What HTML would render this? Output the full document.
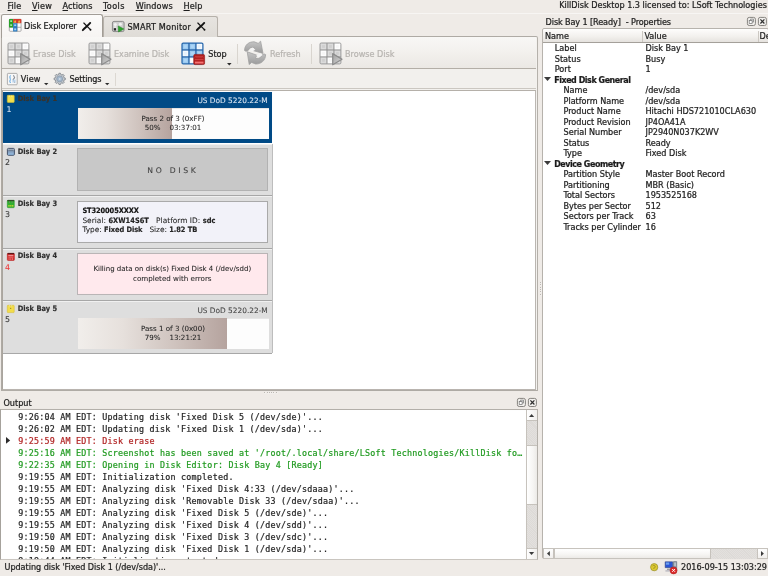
<!DOCTYPE html>
<html lang="en">
<head>
<meta charset="utf-8">
<title>KillDisk Desktop 1.3</title>
<style>
html,body{margin:0;padding:0;}
body{-webkit-text-stroke:0.22px;width:768px;height:576px;overflow:hidden;position:relative;background:#efebe7;font-family:"DejaVu Sans Condensed","Liberation Sans",sans-serif;font-size:9px;color:#1a1a1a;}
#root{position:absolute;left:0;top:0;width:768px;height:576px;overflow:hidden;transform:rotate(0.003deg);transform-origin:384px 288px;will-change:transform;}
.a{position:absolute;white-space:pre;}
.t{position:absolute;white-space:pre;line-height:11px;height:11px;}
.dis{color:#b7b4b0;}
u{text-decoration:underline;text-underline-offset:1.2px;text-decoration-thickness:0.9px;}
.card{font-family:"DejaVu Sans","Liberation Sans",sans-serif;-webkit-text-stroke:0.06px;}
.cb{font-family:"DejaVu Sans Condensed","Liberation Sans",sans-serif;font-weight:bold;-webkit-text-stroke:0.15px;}
.mono{font-family:"DejaVu Sans Mono","Liberation Mono",monospace;font-size:8.4px;letter-spacing:0.21px;-webkit-text-stroke:0.2px;}
.log{position:absolute;left:18.3px;white-space:pre;line-height:12px;height:12px;color:#222;}
.red{color:#b02222;}
.grn{color:#1f9a1f;}
.row{position:absolute;left:0;height:10.5px;line-height:10.5px;white-space:pre;}
svg{position:absolute;overflow:visible;}
</style>
</head>
<body>
<div id="root">
<!-- ===== menu bar ===== -->
<div class="a" id="menubar-edge" style="left:0px;top:12.7px;width:768px;height:1.1px;background:#f7f5f3;"></div>
<div class="t" style="left:7.5px;top:1.1px;letter-spacing:0.05px;"><u>F</u>ile</div>
<div class="t" style="left:32px;top:1.1px;letter-spacing:0.2px;"><u>V</u>iew</div>
<div class="t" style="left:62.5px;top:1.1px;letter-spacing:0.05px;"><u>A</u>ctions</div>
<div class="t" style="left:103px;top:1.1px;letter-spacing:0.42px;"><u>T</u>ools</div>
<div class="t" style="left:135.7px;top:1.1px;letter-spacing:0.14px;"><u>W</u>indows</div>
<div class="t" style="left:183.5px;top:1.1px;letter-spacing:0.12px;"><u>H</u>elp</div>
<div class="t" style="right:1.1px;top:0.4px;">KillDisk Desktop 1.3 licensed to: LSoft Technologies</div>
<!-- ===== tab widget ===== -->
<div class="a" id="pane" style="left:0.5px;top:36.4px;width:535.6px;height:352.2px;border:1px solid #aeaaa4;border-right-color:#b4b0aa;border-radius:0 2px 0 0;background:#f3f1ee;"></div>
<div class="a" id="tab2" style="left:103px;top:16.2px;width:115px;height:20.5px;background:linear-gradient(#e7e4e0,#dfdcd7);border:1px solid #b6b1aa;border-bottom:none;border-radius:2.5px 2.5px 0 0;box-sizing:border-box;"></div>
<div class="a" id="tab1" style="left:0.5px;top:14.2px;width:102.7px;height:24px;background:linear-gradient(#fcfbfa,#f6f4f2);border:1px solid #a19c95;border-bottom:none;border-radius:2.5px 2.5px 0 0;box-sizing:border-box;"></div>
<div class="t" style="left:24px;top:21.2px;letter-spacing:-0.08px;">Disk Explorer</div>
<div class="t" style="left:127.5px;top:21.5px;letter-spacing:0.2px;">SMART Monitor</div>
<!-- ===== toolbar ===== -->
<div class="a" id="tb1" style="left:1.5px;top:37.4px;width:534.6px;height:30.6px;background:linear-gradient(#f8f7f5,#f3f1ee 45%,#ebe8e4);border-bottom:1px solid #b3aea7;"></div>
<div class="t dis" style="left:33px;top:48.5px;">Erase Disk</div>
<div class="t dis" style="left:114px;top:48.5px;">Examine Disk</div>
<div class="t" style="left:208.3px;top:49.0px;">Stop</div>
<div class="t dis" style="left:270px;top:48.5px;">Refresh</div>
<div class="t dis" style="left:345px;top:48.5px;">Browse Disk</div>
<div class="a" style="left:237px;top:44px;width:1px;height:20px;background:#d9d5cf;"></div>
<div class="a" style="left:310.5px;top:44px;width:1px;height:20px;background:#d9d5cf;"></div>
<div class="a" id="tb2" style="left:1.5px;top:69.3px;width:534.6px;height:19px;background:#f2f0ed;border-bottom:1px solid #cbc7c1;"></div>
<div class="t" style="left:20.8px;top:74.2px;letter-spacing:0.12px;">View</div>
<div class="t" style="left:69.6px;top:74.2px;letter-spacing:-0.2px;">Settings</div>
<div class="a" style="left:114.5px;top:72.5px;width:1px;height:13px;background:#dcd8d2;"></div>
<!-- ===== content ===== -->
<div class="a" id="content" style="left:1.7px;top:90px;width:534.2px;height:299.9px;background:#fff;border-top:1px solid #b5b0a9;border-left:1px solid #aaa59e;border-right:0.7px solid #bab6b1;border-bottom:1px solid #b9b4af;box-sizing:border-box;"></div>
<div class="a" id="bay1" style="left:2.7px;top:91.5px;width:269px;height:51.8px;background:#004a86;"></div>
<div class="a" id="bay2" style="left:2.7px;top:143.5px;width:269px;height:50.8px;background:#dedede;border-top:1.2px solid #f0f0f0;border-bottom:1px solid #a6a6a6;"></div>
<div class="a" id="bay3" style="left:2.7px;top:196.0px;width:269px;height:50.8px;background:#dedede;border-top:1.2px solid #f0f0f0;border-bottom:1px solid #a6a6a6;"></div>
<div class="a" id="bay4" style="left:2.7px;top:248.5px;width:269px;height:50.8px;background:#dedede;border-top:1.2px solid #f0f0f0;border-bottom:1px solid #a6a6a6;"></div>
<div class="a" id="bay5" style="left:2.7px;top:301.0px;width:269px;height:50.8px;background:#dedede;border-top:1.2px solid #f0f0f0;border-bottom:1px solid #a6a6a6;"></div>
<div class="a" style="left:271.5px;top:143.5px;width:0.8px;height:209px;background:#bdbdbd;"></div>
<div class="t cb" style="left:17.7px;top:92.9px;font-size:7.45px;letter-spacing:0.02px;color:#3a3228;">Disk Bay 1</div>
<div class="t card" style="left:6.4px;top:104.2px;font-size:7.9px;color:#d4e3f2;">1</div>
<div class="t cb" style="left:17.7px;top:145.5px;font-size:7.45px;letter-spacing:0.02px;color:#2e2e2e;">Disk Bay 2</div>
<div class="t card" style="left:5.0px;top:156.8px;font-size:7.9px;color:#333;">2</div>
<div class="t cb" style="left:17.7px;top:197.9px;font-size:7.45px;letter-spacing:0.02px;color:#2e2e2e;">Disk Bay 3</div>
<div class="t card" style="left:5.0px;top:209.2px;font-size:7.9px;color:#333;">3</div>
<div class="t cb" style="left:17.7px;top:250.4px;font-size:7.45px;letter-spacing:0.02px;color:#2e2e2e;">Disk Bay 4</div>
<div class="t card" style="left:5.0px;top:261.7px;font-size:7.9px;color:#ee3a3a;">4</div>
<div class="t cb" style="left:17.7px;top:302.8px;font-size:7.45px;letter-spacing:0.02px;color:#2e2e2e;">Disk Bay 5</div>
<div class="t card" style="left:5.0px;top:314.1px;font-size:7.9px;color:#333;">5</div>
<!-- bay 1 -->
<div class="t card" style="right:500.3px;top:94.8px;font-size:7.4px;color:#dfe9f4;">US DoD 5220.22-M</div>
<div class="a" style="left:77.5px;top:107.5px;width:191px;height:31.4px;background:#fdfdfd;box-shadow:inset 0 0.8px 0 rgba(0,0,0,0.12);"></div>
<div class="a" style="left:77.5px;top:107.5px;width:94.9px;height:31.4px;background:linear-gradient(90deg,#f1eeeb 0%,#e6e0dc 30%,#cfc3be 65%,#b5a39e 100%);"></div>
<div class="t card" style="left:77.5px;width:191px;text-align:center;top:112.7px;font-size:7.1px;color:#222;">Pass 2 of 3 (0xFF)</div>
<div class="t card" style="left:77.5px;width:191px;text-align:center;top:122.2px;font-size:7.1px;color:#222;">50%    03:37:01</div>
<!-- bay 2 -->
<div class="a" style="left:77px;top:148px;width:190.7px;height:42.6px;background:#c8c8c8;border:1px solid #b2b2b2;box-sizing:border-box;"></div>
<div class="t card" style="left:77px;width:192px;text-align:center;top:165.4px;font-size:7.7px;color:#3c3c3c;letter-spacing:2.7px;">NO DISK</div>
<!-- bay 3 -->
<div class="a" style="left:77px;top:200.6px;width:190.7px;height:42.9px;background:#f2f2f9;border:1px solid #a9a9a9;box-sizing:border-box;"></div>
<div class="t cb" style="left:82.4px;top:204.8px;font-size:7.4px;color:#111;letter-spacing:-0.1px;">ST320005XXXX</div>
<div class="t card" style="left:82.4px;top:214.6px;font-size:7.4px;color:#222;letter-spacing:0.03px;">Serial: <b class="cb">6XW14S6T</b>   Platform ID: <b class="cb">sdc</b></div>
<div class="t card" style="left:82.4px;top:224.2px;font-size:7.4px;color:#222;letter-spacing:-0.04px;">Type: <b class="cb">Fixed Disk</b>   Size: <b class="cb">1.82 TB</b></div>
<!-- bay 4 -->
<div class="a" style="left:77px;top:253.1px;width:190.7px;height:42.4px;background:#ffe9ed;border:1px solid #b9b4b5;box-sizing:border-box;"></div>
<div class="t card" style="left:77px;width:190.5px;text-align:center;top:263.6px;font-size:7px;color:#222;">Killing data on disk(s) Fixed Disk 4 (/dev/sdd)</div>
<div class="t card" style="left:77px;width:190.5px;text-align:center;top:273.2px;font-size:7.15px;color:#222;">completed with errors</div>
<!-- bay 5 -->
<div class="t card" style="right:500.3px;top:304.8px;font-size:7.4px;color:#444;">US DoD 5220.22-M</div>
<div class="a" style="left:77.5px;top:317.5px;width:191px;height:31.4px;background:#fdfdfd;box-shadow:inset 0 0.8px 0 rgba(0,0,0,0.12);"></div>
<div class="a" style="left:77.5px;top:317.5px;width:149.9px;height:31.4px;background:linear-gradient(90deg,#f1eeeb 0%,#e6e0dc 30%,#cfc3be 65%,#b5a39e 100%);"></div>
<div class="t card" style="left:77.5px;width:191px;text-align:center;top:322.7px;font-size:7.1px;color:#222;">Pass 1 of 3 (0x00)</div>
<div class="t card" style="left:77.5px;width:191px;text-align:center;top:332.2px;font-size:7.1px;color:#222;">79%    13:21:21</div>
<div class="a" style="left:264.2px;top:391.8px;width:1.1px;height:1.1px;background:#bbb7b2;box-shadow:0.5px 0.5px 0 #fbfaf9;"></div>
<div class="a" style="left:266.5px;top:391.8px;width:1.1px;height:1.1px;background:#bbb7b2;box-shadow:0.5px 0.5px 0 #fbfaf9;"></div>
<div class="a" style="left:268.8px;top:391.8px;width:1.1px;height:1.1px;background:#bbb7b2;box-shadow:0.5px 0.5px 0 #fbfaf9;"></div>
<div class="a" style="left:271.1px;top:391.8px;width:1.1px;height:1.1px;background:#bbb7b2;box-shadow:0.5px 0.5px 0 #fbfaf9;"></div>
<div class="a" style="left:273.4px;top:391.8px;width:1.1px;height:1.1px;background:#bbb7b2;box-shadow:0.5px 0.5px 0 #fbfaf9;"></div>
<div class="a" style="left:275.7px;top:391.8px;width:1.1px;height:1.1px;background:#bbb7b2;box-shadow:0.5px 0.5px 0 #fbfaf9;"></div>
<div class="a" style="left:539.8px;top:282.0px;width:1.1px;height:1.1px;background:#bbb7b2;box-shadow:0.5px 0.5px 0 #fbfaf9;"></div>
<div class="a" style="left:539.8px;top:284.3px;width:1.1px;height:1.1px;background:#bbb7b2;box-shadow:0.5px 0.5px 0 #fbfaf9;"></div>
<div class="a" style="left:539.8px;top:286.6px;width:1.1px;height:1.1px;background:#bbb7b2;box-shadow:0.5px 0.5px 0 #fbfaf9;"></div>
<div class="a" style="left:539.8px;top:288.9px;width:1.1px;height:1.1px;background:#bbb7b2;box-shadow:0.5px 0.5px 0 #fbfaf9;"></div>
<div class="a" style="left:539.8px;top:291.2px;width:1.1px;height:1.1px;background:#bbb7b2;box-shadow:0.5px 0.5px 0 #fbfaf9;"></div>
<div class="a" style="left:539.8px;top:293.5px;width:1.1px;height:1.1px;background:#bbb7b2;box-shadow:0.5px 0.5px 0 #fbfaf9;"></div>
<!-- ===== output dock ===== -->
<div class="t" style="left:3.5px;top:397.8px;">Output</div>
<div class="a" id="outbox" style="left:0px;top:409px;width:537.7px;height:150.6px;background:#fff;border:1px solid #b3afa9;border-left-color:#a5a19b;border-bottom-color:#c9c5bf;box-sizing:border-box;"></div>
<div class="a mono" id="loglines" style="left:0;top:410.4px;width:526px;height:148.2px;overflow:hidden;">
<div class="log" style="top:0.2px;">9:26:04 AM EDT: Updating disk 'Fixed Disk 5 (/dev/sde)'...</div>
<div class="log" style="top:12.2px;">9:26:02 AM EDT: Updating disk 'Fixed Disk 1 (/dev/sda)'...</div>
<div class="log red" style="top:24.2px;">9:25:59 AM EDT: Disk erase</div>
<div class="log grn" style="top:36.2px;">9:25:16 AM EDT: Screenshot has been saved at '/root/.local/share/LSoft Technologies/KillDisk fo…</div>
<div class="log grn" style="top:48.2px;">9:22:35 AM EDT: Opening in Disk Editor: Disk Bay 4 [Ready]</div>
<div class="log" style="top:60.2px;">9:19:55 AM EDT: Initialization completed.</div>
<div class="log" style="top:72.2px;">9:19:55 AM EDT: Analyzing disk 'Fixed Disk 4:33 (/dev/sdaaa)'...</div>
<div class="log" style="top:84.2px;">9:19:55 AM EDT: Analyzing disk 'Removable Disk 33 (/dev/sdaa)'...</div>
<div class="log" style="top:96.2px;">9:19:55 AM EDT: Analyzing disk 'Fixed Disk 5 (/dev/sde)'...</div>
<div class="log" style="top:108.2px;">9:19:55 AM EDT: Analyzing disk 'Fixed Disk 4 (/dev/sdd)'...</div>
<div class="log" style="top:120.2px;">9:19:50 AM EDT: Analyzing disk 'Fixed Disk 3 (/dev/sdc)'...</div>
<div class="log" style="top:132.2px;">9:19:50 AM EDT: Analyzing disk 'Fixed Disk 1 (/dev/sda)'...</div>
<div class="log" style="top:144.2px;">9:19:44 AM EDT: Initialization started...</div>
</div>
<!-- ===== status bar ===== -->
<div class="t" style="left:4.5px;top:562.2px;letter-spacing:-0.03px;">Updating disk 'Fixed Disk 1 (/dev/sda)'...</div>
<div class="t" style="right:1px;top:561.8px;">2016-09-15 13:03:29</div>
<!-- ===== properties dock ===== -->
<div class="t" style="left:545.6px;top:16.6px;letter-spacing:-0.1px;">Disk Bay 1 [Ready]  - Properties</div>
<div class="a" id="tree" style="left:542px;top:28.4px;width:226.5px;height:530.8px;background:#fff;border:1px solid #b6b2ac;border-radius:2px;box-sizing:border-box;"></div>
<div class="a" id="thead" style="left:543px;top:29.5px;width:225px;height:12.6px;background:linear-gradient(#fcfbfa,#f2f0ed 55%,#e5e2de);border-bottom:1px solid #a39f99;"></div>
<div class="a" style="left:642px;top:30.5px;width:1px;height:11px;background:#cbc7c1;"></div>
<div class="a" style="left:757.5px;top:30.5px;width:1px;height:11px;background:#cbc7c1;"></div>
<div class="t" style="left:545px;top:31.2px;">Name</div>
<div class="t" style="left:644.5px;top:31.2px;">Value</div>
<div class="t" style="left:759.5px;top:31.2px;">De</div>
<div class="a" id="rows" style="left:543px;top:43.45px;width:225px;height:200px;">
<div class="row" style="top:0.0px;left:11.8px;">Label</div>
<div class="row" style="top:0.0px;left:102.5px;">Disk Bay 1</div>
<div class="row" style="top:10.5px;left:11.8px;">Status</div>
<div class="row" style="top:10.5px;left:102.5px;">Busy</div>
<div class="row" style="top:21.0px;left:11.8px;">Port</div>
<div class="row" style="top:21.0px;left:102.5px;">1</div>
<div class="row" style="top:31.5px;left:11.2px;font-weight:bold;font-size:8.8px;letter-spacing:-0.42px;">Fixed Disk General</div>
<svg style="left:0.8px;top:33.8px;" width="7" height="3.9" viewBox="0 0 7 3.9"><path d="M0 0 L7 0 L3.5 3.9 Z" fill="#3a3a3a"/></svg>
<div class="row" style="top:42.0px;left:20.5px;">Name</div>
<div class="row" style="top:42.0px;left:102.5px;">/dev/sda</div>
<div class="row" style="top:52.5px;left:20.5px;">Platform Name</div>
<div class="row" style="top:52.5px;left:102.5px;">/dev/sda</div>
<div class="row" style="top:63.0px;left:20.5px;">Product Name</div>
<div class="row" style="top:63.0px;left:102.5px;">Hitachi HDS721010CLA630</div>
<div class="row" style="top:73.5px;left:20.5px;">Product Revision</div>
<div class="row" style="top:73.5px;left:102.5px;">JP4OA41A</div>
<div class="row" style="top:84.0px;left:20.5px;">Serial Number</div>
<div class="row" style="top:84.0px;left:102.5px;">JP2940N037K2WV</div>
<div class="row" style="top:94.5px;left:20.5px;">Status</div>
<div class="row" style="top:94.5px;left:102.5px;">Ready</div>
<div class="row" style="top:105.0px;left:20.5px;">Type</div>
<div class="row" style="top:105.0px;left:102.5px;">Fixed Disk</div>
<div class="row" style="top:115.5px;left:11.2px;font-weight:bold;font-size:8.8px;letter-spacing:-0.42px;">Device Geometry</div>
<svg style="left:0.8px;top:117.8px;" width="7" height="3.9" viewBox="0 0 7 3.9"><path d="M0 0 L7 0 L3.5 3.9 Z" fill="#3a3a3a"/></svg>
<div class="row" style="top:126.0px;left:20.5px;">Partition Style</div>
<div class="row" style="top:126.0px;left:102.5px;">Master Boot Record</div>
<div class="row" style="top:136.5px;left:20.5px;">Partitioning</div>
<div class="row" style="top:136.5px;left:102.5px;">MBR (Basic)</div>
<div class="row" style="top:147.0px;left:20.5px;">Total Sectors</div>
<div class="row" style="top:147.0px;left:102.5px;">1953525168</div>
<div class="row" style="top:157.5px;left:20.5px;">Bytes per Sector</div>
<div class="row" style="top:157.5px;left:102.5px;">512</div>
<div class="row" style="top:168.0px;left:20.5px;">Sectors per Track</div>
<div class="row" style="top:168.0px;left:102.5px;">63</div>
<div class="row" style="top:178.5px;left:20.5px;">Tracks per Cylinder</div>
<div class="row" style="top:178.5px;left:102.5px;">16</div>
</div>
<svg style="left:8.9px;top:19.2px;" width="12.4" height="12.6" viewBox="0 0 12.4 12.6"><rect x="0.3" y="0.3" width="11.8" height="12" rx="0.8" fill="#fdfdfd" stroke="#8c8c8c" stroke-width="0.7"/><path d="M4.1 8.3 H12.1 M8.2 4.1 V12.3 M0.3 8.3 H4.1" stroke="#8c8c8c" stroke-width="0.7" fill="none"/><rect x="0" y="0" width="4.2" height="8.4" rx="0.6" fill="#27a127"/><rect x="4.1" y="0" width="8.2" height="4.3" rx="0.6" fill="#d53a2c"/><rect x="4.1" y="4.2" width="4.1" height="8.3" fill="#2c7cc0"/><rect x="1.2" y="1.3" width="1.9" height="1.7" fill="#a6e0a6"/><rect x="1.2" y="5.3" width="1.9" height="1.7" fill="#a6e0a6"/><path d="M5.0 3.4 L6.1 1.0 L7.2 3.4 Z M9.0 3.4 L10.1 1.0 L11.2 3.4 Z" fill="#f8e24a"/><rect x="5.2" y="5.4" width="2.0" height="1.7" fill="#a6d6f8"/><rect x="5.2" y="9.4" width="2.0" height="1.9" fill="#a6d6f8"/></svg>
<svg style="left:81.6px;top:22.0px;" width="10" height="10" viewBox="0 0 10 10"><path d="M1.8 1.0 L8.4 7.6" stroke="#111" stroke-width="1.15" stroke-linecap="round" fill="none"/><path d="M8.2 0.9 C6.2 3.0 3.4 5.6 0.8 8.2" stroke="#111" stroke-width="1.9" stroke-linecap="round" fill="none"/><circle cx="8.5" cy="7.7" r="0.95" fill="#111"/></svg>
<svg style="left:195.9px;top:22.0px;" width="10" height="10" viewBox="0 0 10 10"><path d="M1.8 1.0 L8.4 7.6" stroke="#111" stroke-width="1.15" stroke-linecap="round" fill="none"/><path d="M8.2 0.9 C6.2 3.0 3.4 5.6 0.8 8.2" stroke="#111" stroke-width="1.9" stroke-linecap="round" fill="none"/><circle cx="8.5" cy="7.7" r="0.95" fill="#111"/></svg>
<svg style="left:112.2px;top:21px;" width="12.6" height="11.2" viewBox="0 0 12.6 11.2"><rect x="0.4" y="0.4" width="11.7" height="10.2" rx="1.6" fill="#cfcfcf" stroke="#777" stroke-width="0.8"/><circle cx="3.3" cy="3.4" r="1.5" fill="#f2f2f2"/><circle cx="8.4" cy="3.2" r="1.5" fill="#f2f2f2"/><circle cx="3.2" cy="6.2" r="1.2" fill="#e6e6e6"/><rect x="1.8" y="7.2" width="2.2" height="2.3" fill="#222"/><path d="M6.2 5.0 L11.9 8.0 L6.5 11.0 Z" fill="#2fa32f" stroke="#1d7f1d" stroke-width="0.5"/></svg>
<svg style="left:7.6px;top:43.0px;" width="23" height="23" viewBox="0 0 23 23"><rect x="0" y="0" width="20.9" height="20.9" rx="1.2" fill="#fff"/><rect x="0.0" y="0.0" width="6.97" height="6.97" fill="#dbdbdb"/><rect x="2.09" y="2.09" width="2.79" height="2.79" fill="#cfcfcf"/><rect x="6.97" y="0.0" width="6.97" height="6.97" fill="#dbdbdb"/><rect x="9.06" y="2.09" width="2.79" height="2.79" fill="#cfcfcf"/><rect x="13.93" y="0.0" width="6.97" height="6.97" fill="#fdfdfd"/><rect x="16.02" y="2.09" width="2.79" height="2.79" fill="#f6f6f6"/><rect x="0.0" y="6.97" width="6.97" height="6.97" fill="#fdfdfd"/><rect x="2.09" y="9.06" width="2.79" height="2.79" fill="#f6f6f6"/><rect x="6.97" y="6.97" width="6.97" height="6.97" fill="#dbdbdb"/><rect x="9.06" y="9.06" width="2.79" height="2.79" fill="#cfcfcf"/><rect x="13.93" y="6.97" width="6.97" height="6.97" fill="#dbdbdb"/><rect x="16.02" y="9.06" width="2.79" height="2.79" fill="#cfcfcf"/><rect x="0.0" y="13.93" width="6.97" height="6.97" fill="#dbdbdb"/><rect x="2.09" y="16.02" width="2.79" height="2.79" fill="#cfcfcf"/><rect x="6.97" y="13.93" width="6.97" height="6.97" fill="#fdfdfd"/><rect x="9.06" y="16.02" width="2.79" height="2.79" fill="#f6f6f6"/><rect x="13.93" y="13.93" width="6.97" height="6.97" fill="#dbdbdb"/><line x1="6.97" y1="0" x2="6.97" y2="20.9" stroke="#8e8e8e" stroke-width="1.0"/><line x1="0" y1="6.97" x2="20.9" y2="6.97" stroke="#8e8e8e" stroke-width="1.0"/><line x1="13.93" y1="0" x2="13.93" y2="20.9" stroke="#8e8e8e" stroke-width="1.0"/><line x1="0" y1="13.93" x2="20.9" y2="13.93" stroke="#8e8e8e" stroke-width="1.0"/><rect x="0" y="0" width="20.9" height="20.9" rx="1.2" fill="none" stroke="#9a9a9a" stroke-width="1.0"/><defs><linearGradient id="pg7" x1="0" y1="0" x2="1" y2="1"><stop offset="0" stop-color="#9f9f9f"/><stop offset="1" stop-color="#d8d8d8"/></linearGradient></defs><path d="M12.7 10.6 L22.0 16.2 L12.7 21.8 Z" fill="url(#pg7)" stroke="#8c8c8c" stroke-width="1.25" stroke-linejoin="round"/></svg>
<svg style="left:88.6px;top:43.0px;" width="23" height="23" viewBox="0 0 23 23"><rect x="0" y="0" width="20.9" height="20.9" rx="1.2" fill="#fff"/><rect x="0.0" y="0.0" width="6.97" height="6.97" fill="#dbdbdb"/><rect x="2.09" y="2.09" width="2.79" height="2.79" fill="#cfcfcf"/><rect x="6.97" y="0.0" width="6.97" height="6.97" fill="#dbdbdb"/><rect x="9.06" y="2.09" width="2.79" height="2.79" fill="#cfcfcf"/><rect x="13.93" y="0.0" width="6.97" height="6.97" fill="#fdfdfd"/><rect x="16.02" y="2.09" width="2.79" height="2.79" fill="#f6f6f6"/><rect x="0.0" y="6.97" width="6.97" height="6.97" fill="#fdfdfd"/><rect x="2.09" y="9.06" width="2.79" height="2.79" fill="#f6f6f6"/><rect x="6.97" y="6.97" width="6.97" height="6.97" fill="#dbdbdb"/><rect x="9.06" y="9.06" width="2.79" height="2.79" fill="#cfcfcf"/><rect x="13.93" y="6.97" width="6.97" height="6.97" fill="#dbdbdb"/><rect x="16.02" y="9.06" width="2.79" height="2.79" fill="#cfcfcf"/><rect x="0.0" y="13.93" width="6.97" height="6.97" fill="#dbdbdb"/><rect x="2.09" y="16.02" width="2.79" height="2.79" fill="#cfcfcf"/><rect x="6.97" y="13.93" width="6.97" height="6.97" fill="#fdfdfd"/><rect x="9.06" y="16.02" width="2.79" height="2.79" fill="#f6f6f6"/><rect x="13.93" y="13.93" width="6.97" height="6.97" fill="#dbdbdb"/><line x1="6.97" y1="0" x2="6.97" y2="20.9" stroke="#8e8e8e" stroke-width="1.0"/><line x1="0" y1="6.97" x2="20.9" y2="6.97" stroke="#8e8e8e" stroke-width="1.0"/><line x1="13.93" y1="0" x2="13.93" y2="20.9" stroke="#8e8e8e" stroke-width="1.0"/><line x1="0" y1="13.93" x2="20.9" y2="13.93" stroke="#8e8e8e" stroke-width="1.0"/><rect x="0" y="0" width="20.9" height="20.9" rx="1.2" fill="none" stroke="#9a9a9a" stroke-width="1.0"/><defs><linearGradient id="pg88" x1="0" y1="0" x2="1" y2="1"><stop offset="0" stop-color="#9f9f9f"/><stop offset="1" stop-color="#d8d8d8"/></linearGradient></defs><path d="M12.7 10.6 L22.0 16.2 L12.7 21.8 Z" fill="url(#pg88)" stroke="#8c8c8c" stroke-width="1.25" stroke-linejoin="round"/></svg>
<svg style="left:319.5px;top:43.0px;" width="23" height="23" viewBox="0 0 23 23"><rect x="0" y="0" width="20.9" height="20.9" rx="1.2" fill="#fff"/><rect x="0.0" y="0.0" width="6.97" height="6.97" fill="#dbdbdb"/><rect x="2.09" y="2.09" width="2.79" height="2.79" fill="#cfcfcf"/><rect x="6.97" y="0.0" width="6.97" height="6.97" fill="#dbdbdb"/><rect x="9.06" y="2.09" width="2.79" height="2.79" fill="#cfcfcf"/><rect x="13.93" y="0.0" width="6.97" height="6.97" fill="#fdfdfd"/><rect x="16.02" y="2.09" width="2.79" height="2.79" fill="#f6f6f6"/><rect x="0.0" y="6.97" width="6.97" height="6.97" fill="#fdfdfd"/><rect x="2.09" y="9.06" width="2.79" height="2.79" fill="#f6f6f6"/><rect x="6.97" y="6.97" width="6.97" height="6.97" fill="#dbdbdb"/><rect x="9.06" y="9.06" width="2.79" height="2.79" fill="#cfcfcf"/><rect x="13.93" y="6.97" width="6.97" height="6.97" fill="#dbdbdb"/><rect x="16.02" y="9.06" width="2.79" height="2.79" fill="#cfcfcf"/><rect x="0.0" y="13.93" width="6.97" height="6.97" fill="#dbdbdb"/><rect x="2.09" y="16.02" width="2.79" height="2.79" fill="#cfcfcf"/><rect x="6.97" y="13.93" width="6.97" height="6.97" fill="#fdfdfd"/><rect x="9.06" y="16.02" width="2.79" height="2.79" fill="#f6f6f6"/><rect x="13.93" y="13.93" width="6.97" height="6.97" fill="#dbdbdb"/><line x1="6.97" y1="0" x2="6.97" y2="20.9" stroke="#8e8e8e" stroke-width="1.0"/><line x1="0" y1="6.97" x2="20.9" y2="6.97" stroke="#8e8e8e" stroke-width="1.0"/><line x1="13.93" y1="0" x2="13.93" y2="20.9" stroke="#8e8e8e" stroke-width="1.0"/><line x1="0" y1="13.93" x2="20.9" y2="13.93" stroke="#8e8e8e" stroke-width="1.0"/><rect x="0" y="0" width="20.9" height="20.9" rx="1.2" fill="none" stroke="#9a9a9a" stroke-width="1.0"/><defs><linearGradient id="pg319" x1="0" y1="0" x2="1" y2="1"><stop offset="0" stop-color="#9f9f9f"/><stop offset="1" stop-color="#d8d8d8"/></linearGradient></defs><path d="M12.7 10.6 L22.0 16.2 L12.7 21.8 Z" fill="url(#pg319)" stroke="#8c8c8c" stroke-width="1.25" stroke-linejoin="round"/></svg>
<svg style="left:182.4px;top:43.0px;" width="23" height="23" viewBox="0 0 23 23"><rect x="0" y="0" width="20.9" height="20.9" rx="1.2" fill="#fff"/><rect x="0.0" y="0.0" width="6.97" height="6.97" fill="#9ccbf2"/><rect x="2.09" y="2.09" width="2.79" height="2.79" fill="#add5f6"/><rect x="6.97" y="0.0" width="6.97" height="6.97" fill="#9ccbf2"/><rect x="9.06" y="2.09" width="2.79" height="2.79" fill="#add5f6"/><rect x="13.93" y="0.0" width="6.97" height="6.97" fill="#f4f9fe"/><rect x="16.02" y="2.09" width="2.79" height="2.79" fill="#e6f1fc"/><rect x="0.0" y="6.97" width="6.97" height="6.97" fill="#f4f9fe"/><rect x="2.09" y="9.06" width="2.79" height="2.79" fill="#e6f1fc"/><rect x="6.97" y="6.97" width="6.97" height="6.97" fill="#9ccbf2"/><rect x="9.06" y="9.06" width="2.79" height="2.79" fill="#add5f6"/><rect x="13.93" y="6.97" width="6.97" height="6.97" fill="#9ccbf2"/><rect x="16.02" y="9.06" width="2.79" height="2.79" fill="#add5f6"/><rect x="0.0" y="13.93" width="6.97" height="6.97" fill="#9ccbf2"/><rect x="2.09" y="16.02" width="2.79" height="2.79" fill="#add5f6"/><rect x="6.97" y="13.93" width="6.97" height="6.97" fill="#f4f9fe"/><rect x="9.06" y="16.02" width="2.79" height="2.79" fill="#ffffff"/><rect x="13.93" y="13.93" width="6.97" height="6.97" fill="#9ccbf2"/><line x1="6.97" y1="0" x2="6.97" y2="20.9" stroke="#1d5ca3" stroke-width="1.25"/><line x1="0" y1="6.97" x2="20.9" y2="6.97" stroke="#1d5ca3" stroke-width="1.25"/><line x1="13.93" y1="0" x2="13.93" y2="20.9" stroke="#1d5ca3" stroke-width="1.25"/><line x1="0" y1="13.93" x2="20.9" y2="13.93" stroke="#1d5ca3" stroke-width="1.25"/><rect x="0" y="0" width="20.9" height="20.9" rx="1.2" fill="none" stroke="#2465ab" stroke-width="1.25"/><rect x="11.7" y="11.4" width="10.9" height="10.2" rx="1.4" fill="#b21f1f" stroke="#8e1515" stroke-width="0.6"/><rect x="12.9" y="18.6" width="8.6" height="1.9" fill="#f47272"/><path d="M13 14.4 l1 -1 l1 1 l1 -1 l1 1 l1 -1 l1 1 l1 -1 l1 1" stroke="#e46a6a" stroke-width="0.6" fill="none"/><rect x="12.9" y="16.2" width="8.6" height="0.9" fill="#d44a4a"/></svg>
<svg style="left:227.3px;top:62.9px;" width="4.6" height="2.4" viewBox="0 0 4.6 2.4"><path d="M0 0 L4.6 0 L2.3 2.4 Z" fill="#2a2a2a"/></svg>
<svg style="left:43.7px;top:82.6px;" width="4.4" height="2.3" viewBox="0 0 4.4 2.3"><path d="M0 0 L4.4 0 L2.2 2.3 Z" fill="#2a2a2a"/></svg>
<svg style="left:105.1px;top:82.6px;" width="4.4" height="2.3" viewBox="0 0 4.4 2.3"><path d="M0 0 L4.4 0 L2.2 2.3 Z" fill="#2a2a2a"/></svg>
<svg style="left:243.9px;top:41.2px;" width="22" height="24" viewBox="0 0 22 24"><defs><linearGradient id="rg" x1="0" y1="0" x2="0" y2="1"><stop offset="0" stop-color="#c6c6c6"/><stop offset="1" stop-color="#9a9a9a"/></linearGradient></defs><path d="M0.6 9.6 C0.4 4.0 5.0 0.6 10.2 0.8 L14.2 2.4 L16.6 0.2 L19.0 12.4 L8.6 9.4 L10.9 7.3 C8.6 5.6 5.6 6.4 4.6 9.0 C3.4 10.4 1.6 10.6 0.6 9.6 Z" fill="url(#rg)" stroke="#a0a0a0" stroke-width="0.8" stroke-linejoin="round"/><path d="M21.6 13.6 C21.6 19.4 17.0 23.2 11.6 23.0 L7.6 21.4 L5.2 23.6 L3.2 10.8 L13.4 14.4 L11.0 16.6 C13.4 18.2 16.6 17.4 17.6 14.6 C18.8 13.0 20.6 12.6 21.6 13.6 Z" fill="url(#rg)" stroke="#a0a0a0" stroke-width="0.8" stroke-linejoin="round"/><path d="M5.6 8.6 L8.4 6.6 L11.4 8.8 L8.2 10.4 Z" fill="#f4f4f4"/><path d="M12.0 14.0 L16.4 12.6 L18.4 14.2 L14.6 16.2 Z" fill="#f4f4f4"/></svg>
<svg style="left:6.8px;top:72.7px;" width="10.6" height="12.2" viewBox="0 0 10.6 12.2"><rect x="0.4" y="0.4" width="9.8" height="11.4" rx="0.8" fill="#f8f8f8" stroke="#9a9a9a" stroke-width="0.8"/><path d="M3.4 2.4 C1.8 4.4 4.4 6.0 2.8 8.2 L3.4 10.0" stroke="#4f9fe0" stroke-width="1.0" fill="none"/><path d="M6.4 2.2 L7.6 4.6 L6.2 6.6 L7.8 9.8" stroke="#8a8f96" stroke-width="1.1" fill="none"/><rect x="5.2" y="6.6" width="3.6" height="3.0" fill="#b9d6f0" opacity="0.8"/></svg>
<svg style="left:54.1px;top:72.5px;" width="11.4" height="11.8" viewBox="0 0 11.4 11.8"><polygon points="11.35,5.16 11.35,6.64 10.05,7.07 9.6,8.15 10.22,9.37 9.17,10.42 7.95,9.8 6.87,10.25 6.44,11.55 4.96,11.55 4.53,10.25 3.45,9.8 2.23,10.42 1.18,9.37 1.8,8.15 1.35,7.07 0.05,6.64 0.05,5.16 1.35,4.73 1.8,3.65 1.18,2.43 2.23,1.38 3.45,2.0 4.53,1.55 4.96,0.25 6.44,0.25 6.87,1.55 7.95,2.0 9.17,1.38 10.22,2.43 9.6,3.65 10.05,4.73" fill="#c3c9cf" stroke="#7f858b" stroke-width="0.85" stroke-linejoin="round"/><circle cx="5.7" cy="5.9" r="3.0" fill="#a3b7cb" stroke="#8592a1" stroke-width="0.6"/><circle cx="5.7" cy="5.9" r="1.0" fill="#cfdbe6"/></svg>
<svg style="left:6.7px;top:95.2px;" width="7.8" height="8" viewBox="0 0 7.8 8"><rect x="0.3" y="0.3" width="6.9" height="7.1" rx="0.6" fill="#f4e04e" stroke="#d8c234" stroke-width="0.6"/><rect x="1.9" y="0.7" width="1" height="0.8" fill="#f7efc6"/><rect x="4.2" y="0.7" width="1" height="0.8" fill="#f7efc6"/></svg>
<svg style="left:6.7px;top:147.7px;" width="7.8" height="8" viewBox="0 0 7.8 8"><defs><linearGradient id="b2" x1="0" y1="0" x2="0" y2="1"><stop offset="0" stop-color="#d4d8dd"/><stop offset="0.4" stop-color="#8097b3"/><stop offset="0.75" stop-color="#8fb2d6"/><stop offset="1" stop-color="#9ccdf5"/></linearGradient></defs><rect x="0.4" y="0.4" width="7" height="6.9" rx="1" fill="url(#b2)" stroke="#3f4c63" stroke-width="0.95"/><rect x="1.3" y="1.8" width="5.2" height="0.8" fill="#55647b"/></svg>
<svg style="left:6.7px;top:200.1px;" width="7.8" height="8" viewBox="0 0 7.8 8"><rect x="0.3" y="0.3" width="7" height="7.4" rx="0.8" fill="#2fb02f" stroke="#249324" stroke-width="0.5"/><rect x="0.3" y="0.2" width="7" height="1" fill="#2b3a22"/><rect x="1.5" y="5" width="1" height="1.6" fill="#f2e23c"/><rect x="3.4" y="5" width="1" height="1.6" fill="#f2e23c"/><rect x="5.3" y="5" width="1" height="1.6" fill="#f2e23c"/><rect x="2.2" y="1.3" width="0.7" height="1.6" fill="#8a7a7a"/><rect x="4.7" y="1.3" width="0.7" height="1.6" fill="#8a7a7a"/></svg>
<svg style="left:6.7px;top:252.8px;" width="7.8" height="8" viewBox="0 0 7.8 8"><rect x="0.3" y="0.3" width="7.1" height="7.2" rx="0.9" fill="#d22222" stroke="#b81a1a" stroke-width="0.5"/><rect x="0.6" y="0.2" width="6.5" height="1" fill="#3a1414"/><rect x="1.3" y="1.9" width="5.1" height="0.9" fill="#f3b0b0"/><rect x="1.3" y="3.2" width="5.1" height="1.9" fill="#e25a5a"/><rect x="1.6" y="5.6" width="0.9" height="0.9" fill="#fbe9e9"/><rect x="3.4" y="5.6" width="0.9" height="0.9" fill="#fbe9e9"/><rect x="5.2" y="5.6" width="0.9" height="0.9" fill="#fbe9e9"/></svg>
<svg style="left:6.7px;top:305.1px;" width="7.8" height="8" viewBox="0 0 7.8 8"><rect x="0.3" y="0.3" width="6.9" height="7.3" rx="0.7" fill="#f2dc4a" stroke="#d6c036" stroke-width="0.6"/><rect x="2.0" y="0.2" width="0.8" height="1.2" fill="#e9e3b4"/><rect x="4.3" y="0.2" width="0.8" height="1.2" fill="#e9e3b4"/><circle cx="3.7" cy="3.3" r="0.55" fill="#7a6a1e"/></svg>
<svg style="left:517.1px;top:398px;" width="9" height="9" viewBox="0 0 9 9"><rect x="0.4" y="0.4" width="8.0" height="8.1" rx="1.8" fill="#f3f1ee" stroke="#85827e" stroke-width="1.0"/><rect x="3.7" y="2.1" width="2.9" height="2.9" fill="#f4f4f4" stroke="#6e6e6e" stroke-width="0.7"/><rect x="2.2" y="3.5" width="2.9" height="2.9" fill="#ffffff" stroke="#6e6e6e" stroke-width="0.7"/></svg>
<svg style="left:528.0px;top:398px;" width="9" height="9" viewBox="0 0 9 9"><rect x="0.4" y="0.4" width="8.0" height="8.1" rx="1.8" fill="#f3f1ee" stroke="#85827e" stroke-width="1.0"/><path d="M2.4 2.4 L6.4 6.5 M6.4 2.4 L2.4 6.5" stroke="#2e2e2e" stroke-width="1.2" fill="none"/></svg>
<svg style="left:747.1px;top:17.3px;" width="9" height="9" viewBox="0 0 9 9"><rect x="0.4" y="0.4" width="8.0" height="8.1" rx="1.8" fill="#f3f1ee" stroke="#85827e" stroke-width="1.0"/><rect x="3.7" y="2.1" width="2.9" height="2.9" fill="#f4f4f4" stroke="#6e6e6e" stroke-width="0.7"/><rect x="2.2" y="3.5" width="2.9" height="2.9" fill="#ffffff" stroke="#6e6e6e" stroke-width="0.7"/></svg>
<svg style="left:758.0px;top:17.3px;" width="9" height="9" viewBox="0 0 9 9"><rect x="0.4" y="0.4" width="8.0" height="8.1" rx="1.8" fill="#f3f1ee" stroke="#85827e" stroke-width="1.0"/><path d="M2.4 2.4 L6.4 6.5 M6.4 2.4 L2.4 6.5" stroke="#2e2e2e" stroke-width="1.2" fill="none"/></svg>
<div class="a" style="left:526.2px;top:410px;width:10.6px;height:148.8px;background-color:#dddad7;background-image:repeating-linear-gradient(45deg,rgba(255,255,255,0.18) 0 0.7px,rgba(0,0,0,0) 0.7px 1.5px);border-left:1px solid #c6c2bc;box-sizing:border-box;"></div>
<div class="a" style="left:526.2px;top:410px;width:10.6px;height:10.8px;background:linear-gradient(90deg,#fefefe,#f1efed);border:1px solid #c6c2bc;border-right:none;box-sizing:border-box;border-top:none;"></div>
<div class="a" style="left:526.2px;top:547.8px;width:10.6px;height:11px;background:linear-gradient(90deg,#fefefe,#f1efed);border:1px solid #c6c2bc;border-right:none;box-sizing:border-box;border-bottom:none;"></div>
<div class="a" style="left:526.2px;top:445.4px;width:10.6px;height:59.2px;background:linear-gradient(90deg,#ffffff,#f6f5f3 60%,#eceae7);border:1px solid #c6c2bc;border-right:none;box-sizing:border-box;"></div>
<svg style="left:529.4px;top:413.6px;" width="5.2" height="2.9" viewBox="0 0 5.2 2.9"><path d="M0 2.9 L5.2 2.9 L2.6 0 Z" fill="#3a3a3a"/></svg>
<svg style="left:529.4px;top:551.9px;" width="5.2" height="2.9" viewBox="0 0 5.2 2.9"><path d="M0 0 L5.2 0 L2.6 2.9 Z" fill="#3a3a3a"/></svg>
<div class="a" style="left:543px;top:547.8px;width:225px;height:11px;background-color:#dddad7;background-image:repeating-linear-gradient(45deg,rgba(255,255,255,0.18) 0 0.7px,rgba(0,0,0,0) 0.7px 1.5px);border-top:1px solid #c6c2bc;box-sizing:border-box;"></div>
<div class="a" style="left:543px;top:547.8px;width:11px;height:11px;background:linear-gradient(#fefefe,#f1efed);border:1px solid #c6c2bc;box-sizing:border-box;"></div>
<div class="a" style="left:757px;top:547.8px;width:11px;height:11px;background:linear-gradient(#fefefe,#f1efed);border:1px solid #c6c2bc;box-sizing:border-box;"></div>
<div class="a" style="left:553.5px;top:547.8px;width:157.5px;height:11px;background:linear-gradient(#ffffff,#f6f5f3 60%,#eceae7);border:1px solid #c6c2bc;box-sizing:border-box;"></div>
<svg style="left:546.8px;top:550.7px;" width="2.9" height="5.2" viewBox="0 0 2.9 5.2"><path d="M2.9 0 L2.9 5.2 L0 2.6 Z" fill="#3a3a3a"/></svg>
<svg style="left:761.3px;top:550.7px;" width="2.9" height="5.2" viewBox="0 0 2.9 5.2"><path d="M0 0 L0 5.2 L2.9 2.6 Z" fill="#3a3a3a"/></svg>
<svg style="left:5.8px;top:436.6px;" width="4.2" height="6.8" viewBox="0 0 4.2 6.8"><path d="M0 0 L4.2 3.4 L0 6.8 Z" fill="#2a2a2a"/></svg>
<svg style="left:649.6px;top:563.2px;" width="8.4" height="8.4" viewBox="0 0 8.4 8.4"><circle cx="4.2" cy="4.2" r="3.6" fill="#dfcc30" stroke="#9c902c" stroke-width="0.8"/><path d="M2.6 3.0 C3.6 1.8 5.6 2.6 5.2 4.0 C5.0 5.2 3.6 5.6 3.0 5.0" stroke="#8f8424" stroke-width="0.8" fill="none"/></svg>
<svg style="left:663.6px;top:561.3px;" width="14" height="13.4" viewBox="0 0 14 13.4"><rect x="1.2" y="0.8" width="7.4" height="5.8" fill="#2a55d6" stroke="#28407a" stroke-width="0.6"/><rect x="2.0" y="1.5" width="3.2" height="2.2" fill="#6fa2ee"/><rect x="9.5" y="0.6" width="3.2" height="8.6" fill="#8c98a6" stroke="#5b6672" stroke-width="0.6"/><rect x="10.6" y="1.6" width="0.9" height="3.4" fill="#e4e8ee"/><rect x="3.0" y="7.6" width="4.2" height="1.6" fill="#9b9ba2"/><rect x="1.4" y="9.2" width="7.6" height="1.4" fill="#b9b9c0"/><circle cx="9.6" cy="9.4" r="3.5" fill="#dc2a2a" stroke="#a51616" stroke-width="0.5"/><path d="M8.2 8.0 L11.0 10.8 M11.0 8.0 L8.2 10.8" stroke="#fff" stroke-width="1.0"/></svg>
</div>
</body>
</html>
